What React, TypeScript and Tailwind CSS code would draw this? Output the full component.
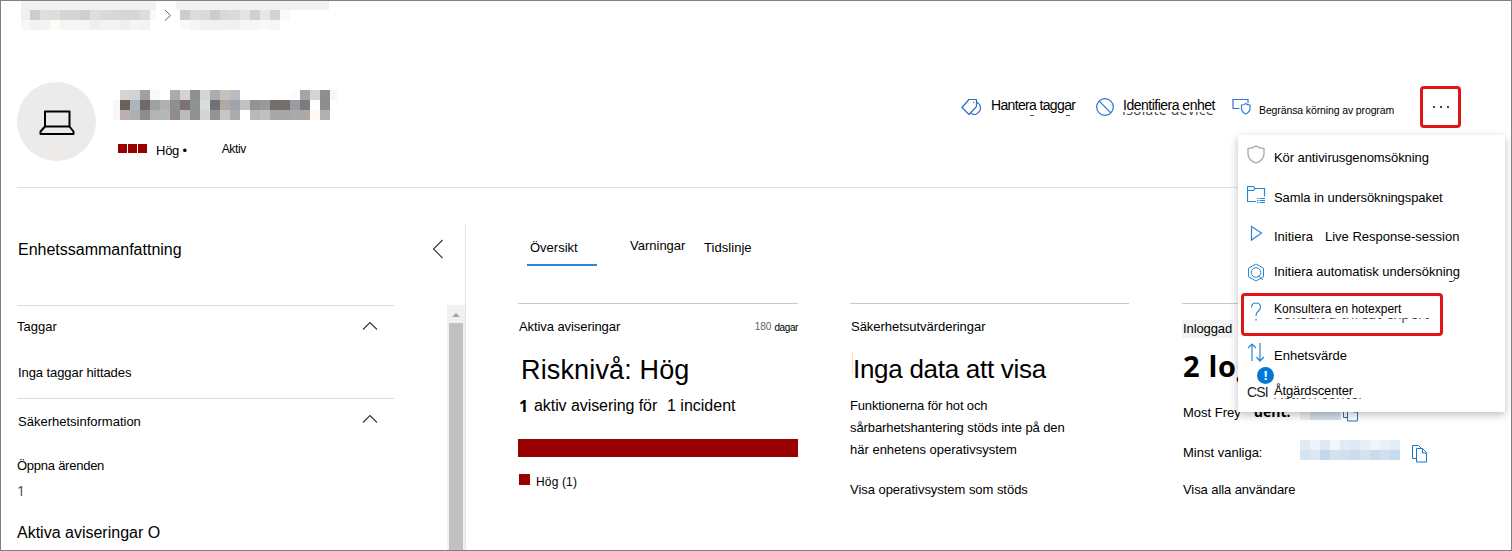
import React from "react";

type Cell = [number, number, string];

function Mosaic({ w, h, cells, className = "" }: { w: number; h: number; cells: Cell[]; className?: string }) {
  return (
    <svg width={w} height={h} viewBox={`0 0 ${w} ${h}`} shapeRendering="crispEdges" className={`shrink-0 ${className}`}>
      {cells.map(([x, y, c], i) => (
        <rect key={i} x={x} y={y} width="10" height="10" fill={`#${c}`} />
      ))}
    </svg>
  );
}

const row = (x0: number, y: number, colors: string): Cell[] =>
  colors.split(" ").map((c, i) => [x0 + i * 10, y, c] as Cell);

const crumbA = [
  ...row(-1, 0, "f0efed cdcdcf dedee1 e0ddd9 d7d5d4 d8d3d1 cfcfd2 e0dedb d8dad8 d8d8d8 d9d5d3 d4d6db e2dcd4 f4faff"),
  ...row(-1, 10, "f8f8f8 f1f1f2 f3f3f3 fcfcf9 f5f5f4 f5f5f5 f5f5f5 efeeed f3f3f3 f3f3f3 f0efee f5f5f5 f3f3f3 fefefe"),
];
const crumbB = [
  ...row(4, 0, "cfcdcb dddcd6 d6dadf cecccb d5d8dc dbdbda e4e3e0 d0d0d2 e8e7e3 d6d1d7 fafafc"),
  ...row(4, 10, "f9f9f9 f5f5f5 f1f1f1 f2f1f0 eff1f1 eff1f0 f6f6f6 f7f7f5 f9f9f9 f6f6f6 ffffff"),
];
const nameCells = [
  ...row(-3, 10, "f8f7f6"),
  ...row(-3, 20, "f8f8f8"),
  ...row(7, 0, "d9d3d0 cfd3d3 a0a0a3 f8f9fc ffffff aeaaa7 d6d4d3 8d8f91 d4d6d5 a9adb1 c5c1bd b9bdc3 ffffff ffffff ffffff ffffff ffffff fefcfa a4a5a8 d7d3d1 8e8e8e f2f8fc"),
  ...row(7, 10, "6b605c adb5bd 706969 a0a1a3 b1b0ac 8a9094 7b7373 909192 dbdcdd 6f7375 adaaa5 a0a3aa c1c1c0 929493 979a99 736e67 70716c 9a9ba3 7a7d7b ffffff 8e8e8e"),
  ...row(7, 20, "bab0ad adafb6 8d8d8c b4b4b4 b4b8b8 938b86 bbbbbb 909191 d4d6d5 909599 c7c6c1 a9adb0 ffffff bcb8b3 bcc1c4 aaa7a4 aaa8a6 aaa9ab aca8a6 fdf8f3 adb1b6"),
];
const userA = row(0, 0, "eeeeef d3dce6 d3dce6 d6dde6 e6ecf2");
const userB = [
  ...row(0, 0, "dfeaf5 ecf3fa dfe9f5 f3f7fb e2eaf4 dde9f5 e6eef7 eff5fa e9f1f8 e3edf6"),
  ...row(0, 10, "d6e3f1 dbe7f3 c2d8ed d5e1ef d4dfee cbdded d6e1ee c8dcee d0e0f0 c9dcee"),
];

function T({ c = "", children }: { c?: string; children: React.ReactNode }) {
  return <div className={`shrink-0 whitespace-pre ${c}`}>{children}</div>;
}

const Svg = ({ w, h, c = "", children }: { w: number; h: number; c?: string; children: React.ReactNode }) => (
  <svg width={w} height={h} viewBox={`0 0 ${w} ${h}`} fill="none" className={`shrink-0 ${c}`}>
    {children}
  </svg>
);

const ChevronUp = ({ c = "" }: { c?: string }) => (
  <Svg w={16} h={10} c={c}>
    <path d="M1 8.5 8 1.5l7 7" stroke="#333" strokeWidth="1.1" />
  </Svg>
);

const CopyIcon = ({ c = "" }: { c?: string }) => (
  <Svg w={16} h={18} c={c}>
    <path d="M4.500 13.500H.500V.500h6l3 3M4.500 3.500h6l4 4v9.500h-10zM10.500 3.500v4.500h4" stroke="#1a73c7" />
  </Svg>
);

function Header() {
  return (
    <header className="flex h-[157px] shrink-0">
      <div className="ml-4 flex h-full w-[1478px] border-b border-[#e1dfdd]">
        <div className="mt-[51px] flex size-[79px] shrink-0 items-center justify-center rounded-full bg-[#ecebea]">
          <Svg w={36} h={26} c="mt-0.5">
            <path d="M6 1.500h24.500v15H6zM6 16.500h24.500l4 5v2.500H1.500v-2.500z" stroke="#000" strokeWidth="2" strokeLinejoin="round" />
          </Svg>
        </div>
        <div className="ml-[17px] mt-[59px] w-[224px] shrink-0">
          <Mosaic w={224} h={30} cells={nameCells} />
          <div className="ml-[5px] mt-[21px] flex h-5">
            <div className="mt-[3px] flex gap-px">
              <i className="h-[9px] w-[9px] bg-[#990000]" />
              <i className="h-[9px] w-[9px] bg-[#990000]" />
              <i className="h-[9px] w-[9px] bg-[#990000]" />
            </div>
            <T c="ml-[9px] mt-0.5 text-[13px] leading-4 tracking-[-0.25px]">Hög •</T>
            <T c="ml-[35px] text-[12px] leading-4 tracking-[-0.4px]">Aktiv</T>
          </div>
        </div>
        <div className="ml-[624px] mt-[55px] flex h-[42px] shrink-0">
          <Svg w={21} h={18} c="mt-3">
            <path d="M1 9.500 8 1.500h7.500v7L8 16.500zM15.500 4q4 2 4 6t-5 6.500h-2L9.500 15" stroke="#2a6fc4" strokeWidth="1.2" strokeLinejoin="round" />
            <circle cx="12.700" cy="4.500" r=".7" fill="#2a6fc4" />
          </Svg>
          <div className="relative ml-[9px] mt-[11px] w-[85px]">
            <T c="text-[14px] leading-4 tracking-[-0.65px]">Hantera taggar</T>
            <i className="absolute left-[39px] top-[18px] h-px w-1 bg-[#555]" />
            <i className="absolute left-[75px] top-[18px] h-px w-1 bg-[#555]" />
          </div>
          <Svg w={18} h={18} c="ml-5 mt-3">
            <circle cx="9" cy="9" r="8.300" stroke="#2a6fd0" strokeWidth="1.2" />
            <path d="m3.200 3.200 11.600 11.600" stroke="#2a6fd0" strokeWidth="1.2" />
          </Svg>
          <div className="relative ml-[9px] mt-[11px] w-[93px]">
            <div className="absolute -left-px top-[15px] h-[5px] overflow-hidden text-[#444]">
              <T c="-mt-[12px] font-['Open_Sans',sans-serif] text-[14px] leading-5 tracking-[0.25px]">Isolate device</T>
            </div>
            <T c="relative text-[14px] leading-[17px] tracking-[-0.5px]">Identifiera enhet</T>
          </div>
          <Svg w={19} h={17} c="ml-[16px] mt-[12px]">
            <path d="M7.500 10.500H1V1.500h15V5" stroke="#3b6fd0" strokeWidth="1.2" />
            <path d="M9.500 7q3 0 4.200-1.500Q15 7 18 7v3.500q0 3.500-4.300 5.500-4.200-2-4.200-5.500z" stroke="#2a7ed0" strokeWidth="1.2" />
          </Svg>
          <T c="ml-2 mt-4 w-[137px] text-[10.5px] leading-4 tracking-[-0.12px]">Begränsa körning av program</T>
          <div className="ml-6 flex h-[42px] w-[41px] items-center justify-center gap-[5px] rounded-[4px] border-[3px] border-[#e01515]">
            <i className="size-[2px] bg-[#444]" />
            <i className="size-[2px] bg-[#444]" />
            <i className="size-[2px] bg-[#444]" />
          </div>
        </div>
      </div>
    </header>
  );
}

function Sidebar() {
  return (
    <aside className="flex w-[465px] shrink-0 pl-4 pt-9">
      <div className="w-[377px] shrink-0">
        <div className="h-[81px] pt-4">
          <T c="ml-px text-[16px] leading-5">Enhetssammanfattning</T>
        </div>
        <section className="h-[93px] border-t border-[#dcdcdc]">
          <div className="flex justify-between pr-4 pt-[13px]">
            <T c="text-[13px] leading-4">Taggar</T>
            <ChevronUp c="mt-[2px]" />
          </div>
          <T c="ml-px mt-[30px] text-[13px] leading-4 tracking-[-0.08px]">Inga taggar hittades</T>
        </section>
        <section className="border-t border-[#dcdcdc]">
          <div className="flex justify-between pr-4 pt-[15px]">
            <T c="ml-px text-[13px] leading-4">Säkerhetsinformation</T>
            <ChevronUp />
          </div>
          <T c="mt-7 text-[13px] leading-4 tracking-[-0.25px]">Öppna ärenden</T>
          <T c="mt-[7px] font-['Open_Sans',sans-serif] text-[14px] leading-5 text-[#444]">1</T>
          <T c="mt-[22px] text-[16px] leading-5">Aktiva aviseringar O</T>
        </section>
      </div>
      <div className="ml-auto flex w-[72px] flex-col items-end border-r border-[#e6e6e6]">
        <div className="h-[81px] w-full pt-[15px]">
          <Svg w={12} h={20} c="ml-[38px]">
            <path d="M10.500 1 1.500 10l9 9" stroke="#333" strokeWidth="1.1" />
          </Svg>
        </div>
        <div className="flex w-[18px] grow flex-col items-center bg-[#f1f1f1]">
          <Svg w={8} h={4} c="mb-[6px] mt-[8px]">
            <path d="M0 4 4 0l4 4z" fill="#a3a3a3" />
          </Svg>
          <div className="w-[14px] grow bg-[#c1c1c1]" />
        </div>
      </div>
    </aside>
  );
}

function Main() {
  return (
    <main className="flex grow flex-col pl-[52px]">
      <nav className="ml-[9px] flex h-[115px] pt-[49px]">
        <div className="h-[29px] w-[70px] border-b-2 border-[#2b88d8]">
          <T c="ml-[3px] mt-[3px] text-[13px] leading-4">Översikt</T>
        </div>
        <T c="ml-[33px] mt-px w-[74px] text-[13px] leading-4">Varningar</T>
        <T c="mt-[3px] text-[13px] leading-4 tracking-[0.05px]">Tidslinje</T>
      </nav>
      <div className="flex">
        <section className="w-[280px] shrink-0 border-t border-[#c8c8c8] pt-[15px]">
          <div className="flex h-4 justify-between">
            <T c="ml-px text-[13px] leading-4 tracking-[-0.08px]">Aktiva aviseringar</T>
            <div className="flex">
              <T c="mr-[3px] text-[10px] leading-[15px] text-[#666]">180</T>
              <T c="text-[10px] leading-[17px] tracking-[-0.4px]">dagar</T>
            </div>
          </div>
          <T c="ml-[3px] mt-5 text-[27px] leading-[30px] tracking-[0.15px]">Risknivå: Hög</T>
          <div className="ml-px mt-[11px] flex h-5 text-[16px] leading-5">
            <T c="w-[15px] font-['Open_Sans',sans-serif] font-bold">1</T>
            <T c="w-[133px] tracking-[-0.07px]">aktiv avisering för</T>
            <T>1 incident</T>
          </div>
          <div className="mt-[23px] h-[18px] bg-[#990000]" />
          <div className="ml-px mt-[17px] flex">
            <i className="h-[11px] w-[11px] bg-[#990000]" />
            <T c="ml-[6px] text-[12px] leading-4 tracking-[0.15px]">Hög (1)</T>
          </div>
        </section>
        <section className="ml-[52px] w-[279px] shrink-0 border-t border-[#c8c8c8] pt-[15px]">
          <T c="ml-px text-[13px] leading-4 tracking-[-0.03px]">Säkerhetsutvärderingar</T>
          <div className="ml-[2px] mt-[17px] flex">
            <i className="h-[22px] w-px bg-[#fbe3a8]" />
            <T c="mt-px h-[31px] text-[26px] leading-8 tracking-[-0.28px]">Inga data att visa</T>
          </div>
          <div className="mt-[11px] text-[13px] leading-[22px]">
            <T c="tracking-[-0.15px]">Funktionerna för hot och</T>
            <T c="tracking-[-0.1px]">sårbarhetshantering stöds inte på den</T>
            <T>här enhetens operativsystem</T>
          </div>
          <T c="mt-[21px] text-[13px] leading-4 tracking-[-0.04px]">Visa operativsystem som stöds</T>
        </section>
        <section className="ml-[53px] w-[280px] shrink-0 border-t border-[#c8c8c8] pt-4">
          <T c="w-[51px] bg-[#f2f2f2] pl-px text-[13px] leading-[18px] tracking-[-0.1px]">Inloggad</T>
          <T c="ml-px mt-2 font-['Open_Sans',sans-serif] text-[29px] font-bold leading-10 tracking-[0.7px]">2 loggade</T>
          <div className="ml-px mt-[19px] flex h-[26px]">
            <T c="text-[13px] leading-4">Most Frey</T>
            <T c="ml-[13px] w-[46px] font-['Open_Sans',sans-serif] text-[14px] font-bold leading-[14px]">uent:</T>
            <Mosaic w={41} h={10} cells={userA} className="mt-[5px]" />
            <CopyIcon c="ml-[2px] -mt-px" />
          </div>
          <div className="ml-px flex h-[34px] pt-[9px]">
            <T c="mt-[5px] w-[117px] text-[13px] leading-4">Minst vanliga:</T>
            <Mosaic w={100} h={20} cells={userB} />
            <CopyIcon c="ml-3 mt-[5px]" />
          </div>
          <T c="ml-px mt-[17px] text-[13px] leading-4 tracking-[-0.08px]">Visa alla användare</T>
        </section>
      </div>
    </main>
  );
}

function Item({ icon, c, t, children }: { icon: React.ReactNode; c: string; t: string; children: React.ReactNode }) {
  return (
    <div className={`flex shrink-0 ${c}`}>
      <div className="w-[27px] shrink-0">{icon}</div>
      <div className={`relative shrink-0 whitespace-pre text-[13px] leading-4 ${t}`}>{children}</div>
    </div>
  );
}

function Menu() {
  const b = "#2a86d0";
  return (
    <div className="absolute left-[1237px] top-[134px] flex h-[277px] w-[267px] flex-col bg-white shadow-[0_3px_8px_rgba(0,0,0,0.25)]">
      <Item c="ml-[9px] h-[41px] pt-[10px]" t="mt-[5px] tracking-[-0.08px]" icon={
        <Svg w={18} h={19}><path d="M1 3.500Q6 3.500 9 1q3 2.500 8 2.500V9q0 6-8 9-8-3-8-9z" stroke="#a0a0a0" strokeWidth="1.2" /></Svg>
      }>Kör antivirusgenomsökning</Item>
      <Item c="ml-[9px] h-10 pt-[10px]" t="mt-1 tracking-[-0.07px]" icon={
        <Svg w={19} h={18}><path d="M9 15.500H.500v-15h6l1.500 2h9.500v8M.500 4.500h6l1.500-2" stroke={b} strokeWidth="1.200" /><path d="M10 12.500h1.500M12.500 12.500H18M10 14.500h1.500M12.500 14.500H18M10 16.500h1.500M12.500 16.500H18" stroke={b} /></Svg>
      }>Samla in undersökningspaket</Item>
      <Item c="ml-[9px] h-9 pt-[9px]" t="mt-1" icon={
        <Svg w={18} h={17}><path d="M4.500 1.500v13.500L14.500 8z" stroke={b} strokeWidth="1.200" /></Svg>
      }><span className="inline-block w-[51px]">Initiera</span>Live Response-session</Item>
      <Item c="ml-[9px] h-[41px] pt-[11px]" t="mt-px tracking-[-0.04px]" icon={
        <Svg w={18} h={19}><path d="M9 1l7.500 4.200v8.600L9 18l-7.500-4.200V5.200z" stroke={b} /><circle cx="9" cy="9.500" r="4.800" stroke={b} /><path d="m11 12.500 5 4.500" stroke={b} /></Svg>
      }>
        Initiera automatisk undersökning
        <svg width="8" height="4" viewBox="0 0 8 4" fill="none" className="absolute left-[175px] top-[15px]"><path d="M0 2.500q4 1 6-2" stroke="#333" /></svg>
      </Item>
      <div className="ml-[3px] flex h-[43px] w-[202px] shrink-0 rounded-[4px] border-[3px] border-[#e01515]">
        <div className="w-[30px] shrink-0 pl-[6px] pt-[6px]">
          <Svg w={12} h={20}><path d="M1.500 5.500Q1.500 1 6 1t4.500 4q0 2.500-2.500 4.500T6 14" stroke={b} strokeWidth="1.200" /><path d="M6 17v1.500" stroke={b} strokeWidth="1.300" /></Svg>
        </div>
        <div className="relative pt-[5px]">
          <div className="absolute left-0 top-[22px] h-[5px] overflow-hidden text-[#444]">
            <T c="-mt-[14px] font-['Open_Sans',sans-serif] text-[14px] leading-5 tracking-[0.2px]">Consult a threat expert</T>
          </div>
          <T c="relative text-[12px] leading-4">Konsultera en hotexpert</T>
        </div>
      </div>
      <Item c="ml-[9px] h-[31px] pt-[7px]" t="mt-[5px]" icon={
        <Svg w={18} h={19}><path d="M5 18V1M1 5l4-4 4 4M13 0v18M9.500 14l3.500 4 4-4" stroke={b} strokeWidth="1.200" /></Svg>
      }>Enhetsvärde</Item>
      <div className="relative ml-[9px] flex pt-4">
        <div className="absolute left-[10px] top-0 size-[17px] rounded-full bg-[#0078d7] text-center font-['Open_Sans',sans-serif] text-[13px] font-bold leading-[17px] text-white">!</div>
        <T c="-mt-px w-[27px] text-[14px] leading-5 tracking-[-0.8px] text-[#222]">CSI</T>
        <div className="relative">
          <div className="absolute left-0 top-[15px] h-[3px] overflow-hidden text-[#444]">
            <T c="-mt-[14px] font-['Open_Sans',sans-serif] text-[14px] leading-5 tracking-[0.3px]">Action center</T>
          </div>
          <T c="relative text-[13px] leading-4 tracking-[-0.15px]">Åtgärdscenter</T>
        </div>
      </div>
    </div>
  );
}

export default function App() {
  return (
    <div className="relative flex h-[551px] w-[1512px] flex-col overflow-hidden border border-[#808080] bg-white font-['Liberation_Sans',Arial,sans-serif] text-black">
      <div className="flex h-[30px] shrink-0 pl-5">
        <div className="w-[135px]">
          <div className="h-[9px] bg-[#f1f1f1]" />
          <Mosaic w={135} h={20} cells={crumbA} />
        </div>
        <Svg w={8} h={12} c="ml-[8px] mt-[8px]">
          <path d="m1 1 5.500 5.500L1 11.500" stroke="#666" />
        </Svg>
        <div className="ml-1 w-[153px]">
          <div className="h-[9px] bg-[#f1f1f1]" />
          <Mosaic w={153} h={20} cells={crumbB} />
        </div>
      </div>
      <Header />
      <div className="flex min-h-0 grow">
        <Sidebar />
        <Main />
      </div>
      <Menu />
    </div>
  );
}
